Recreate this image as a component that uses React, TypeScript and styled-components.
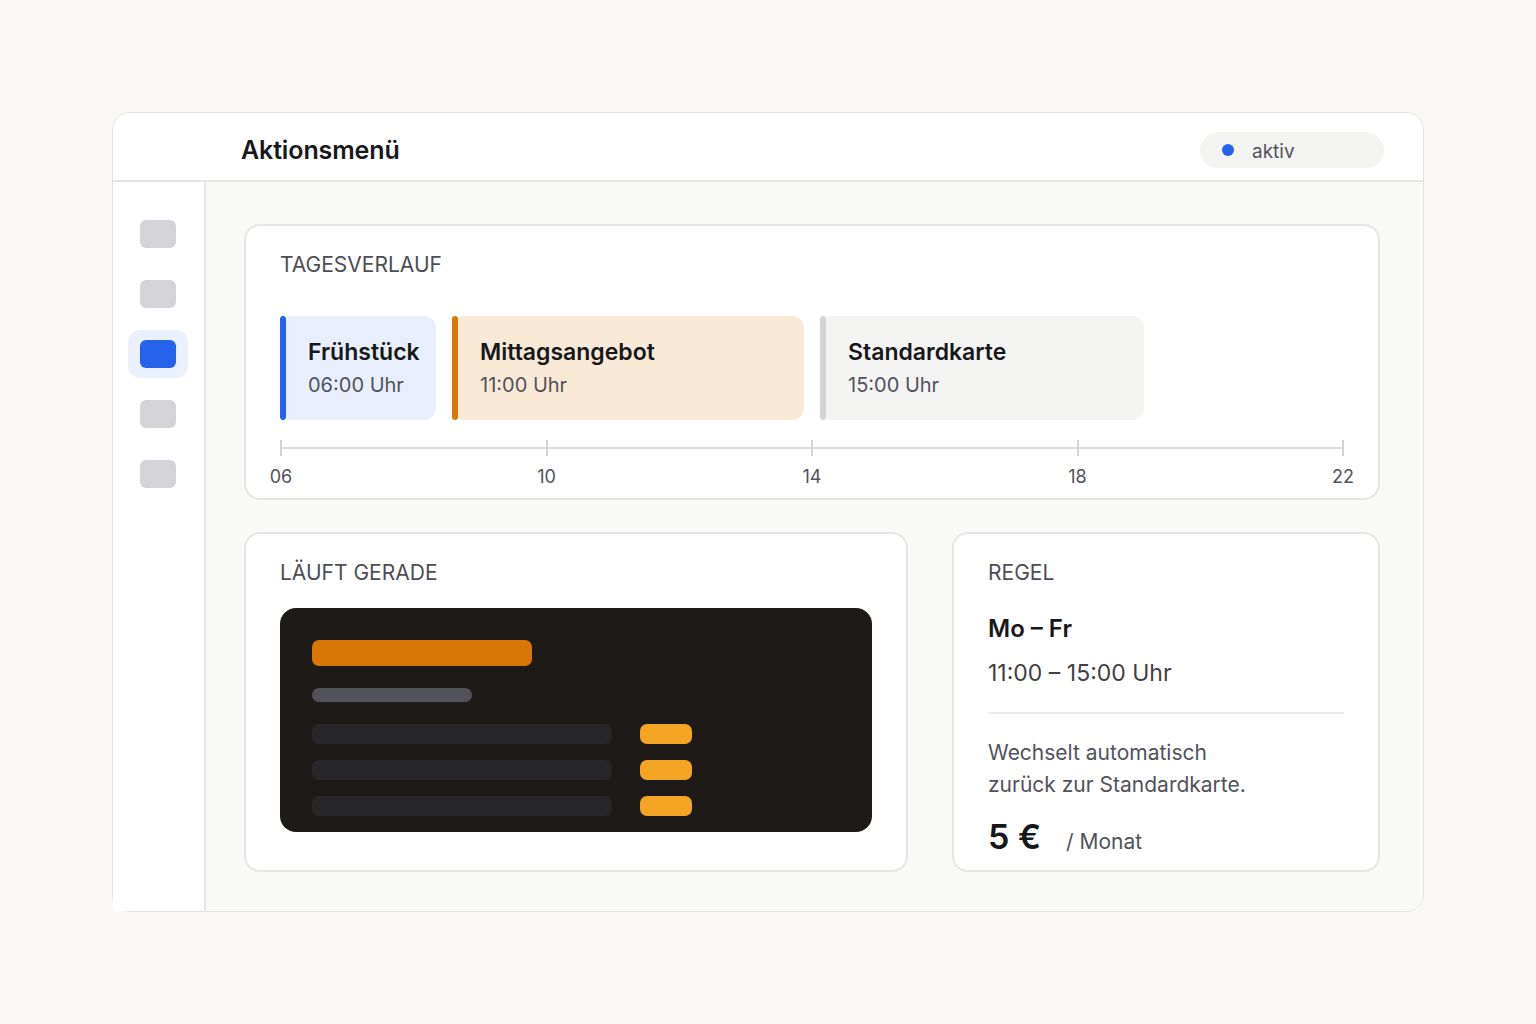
import styled, { createGlobalStyle } from "styled-components";

const GlobalStyle = createGlobalStyle`
  * {
    box-sizing: border-box;
  }
  body {
    margin: 0;
    background: #faf8f4;
    font-family: Inter, "Noto Sans", sans-serif;
    color: #18181b;
  }
`;

const Page = styled.div`
  padding: 112px;
  display: flex;
  justify-content: center;
`;

const Frame = styled.div`
  width: 1312px;
  height: 800px;
  background: #fff;
  border: 1px solid #e5e4e2;
  border-radius: 18px;
  display: flex;
  flex-direction: column;
`;

const Header = styled.header`
  height: 69px;
  flex-shrink: 0;
  border-bottom: 2px solid #e7e6e4;
  display: flex;
  align-items: center;
  justify-content: space-between;
  padding: 7px 39px 0 128px;
`;

const Title = styled.h1`
  margin: 0;
  font-size: 25px;
  font-weight: 600;
  letter-spacing: -0.005em;
  color: #18181b;
`;

const Status = styled.div`
  width: 184px;
  height: 36px;
  border-radius: 18px;
  background: #f4f4f3;
  display: flex;
  align-items: center;
  gap: 18px;
  padding: 2px 0 0 22px;
  font-size: 19px;
  color: #52525b;
`;

const Dot = styled.span`
  width: 12px;
  height: 12px;
  margin-top: -2px;
  border-radius: 50%;
  background: #2563eb;
`;

const Body = styled.div`
  flex: 1;
  display: flex;
  min-height: 0;
`;

const Sidebar = styled.nav`
  width: 93px;
  flex-shrink: 0;
  background: #fff;
  border-right: 2px solid #e7e6e4;
  padding: 28px 2px 0 0;
  display: flex;
  flex-direction: column;
  align-items: center;
  gap: 12px;
`;

const NavItem = styled.div<{ $active?: boolean }>`
  width: 60px;
  height: 48px;
  border-radius: 12px;
  background: ${(p) => (p.$active ? "#eaf0fd" : "transparent")};
  display: flex;
  align-items: center;
  justify-content: center;

  &::after {
    content: "";
    width: 36px;
    height: 28px;
    border-radius: 6px;
    background: ${(p) => (p.$active ? "#2563eb" : "#d4d4d8")};
  }
`;

const Main = styled.main`
  flex: 1;
  min-width: 0;
  background: #f9f9f8;
  border-bottom-right-radius: 17px;
  padding: 42px 43px 39px 38px;
  display: flex;
  flex-direction: column;
  gap: 32px;
`;

const Card = styled.section<{ $bottom?: number }>`
  background: #fff;
  border: 2px solid #e7e6e4;
  border-radius: 16px;
  padding: 27px 34px ${(p) => p.$bottom ?? 36}px;
  display: flex;
  flex-direction: column;
  min-height: 0;
`;

const Label = styled.div`
  font-size: 21px;
  line-height: 24px;
  color: #4d4d55;
  text-transform: uppercase;
`;

const Blocks = styled.div`
  display: flex;
  gap: 16px;
  margin-top: 39px;
`;

const Block = styled.div<{ $width: number }>`
  width: ${(p) => p.$width}px;
  height: 104px;
  display: flex;
`;

const BlockBar = styled.div<{ $color: string }>`
  width: 6px;
  border-radius: 3px;
  background: ${(p) => p.$color};
`;

const BlockBody = styled.div<{ $bg: string }>`
  flex: 1;
  background: ${(p) => p.$bg};
  border-radius: 4px 12px 12px 4px;
  padding: 22px 0 0 22px;
`;

const BlockName = styled.div`
  font-size: 23px;
  line-height: 28px;
  font-weight: 600;
  color: #18181b;
  white-space: nowrap;
`;

const BlockTime = styled.div`
  margin-top: 7px;
  font-size: 20px;
  line-height: 24px;
  color: #52525b;
`;

const TickRow = styled.div`
  margin-top: 20px;
  height: 16px;
  display: flex;
  justify-content: space-between;
  background: linear-gradient(#dcdce0, #dcdce0) center / 100% 2px no-repeat;
`;

const Tick = styled.span`
  width: 2px;
  height: 16px;
  background: #d4d4d8;
`;

const AxisLabels = styled.div`
  margin-top: 10px;
  display: flex;
  justify-content: space-between;
`;

const AxisLabel = styled.span`
  width: 2px;
  display: flex;
  justify-content: center;
  font-size: 18px;
  line-height: 22px;
  color: #52525b;
  white-space: nowrap;
`;

const Row = styled.div`
  flex: 1;
  min-height: 0;
  display: grid;
  grid-template-columns: 664px 1fr;
  column-gap: 44px;
`;

const Screen = styled.div`
  margin-top: 23px;
  height: 224px;
  border-radius: 16px;
  background: #1e1a17;
  padding: 32px;
  display: flex;
  flex-direction: column;
`;

const Bar = styled.div<{ $w: number; $h: number; $color: string; $mt?: number }>`
  width: ${(p) => p.$w}px;
  height: ${(p) => p.$h}px;
  margin-top: ${(p) => p.$mt ?? 0}px;
  border-radius: ${(p) => Math.min(7, p.$h / 2)}px;
  background: ${(p) => p.$color};
  flex-shrink: 0;
`;

const MenuLines = styled.div`
  margin-top: 22px;
  display: flex;
  flex-direction: column;
  gap: 16px;
`;

const MenuLine = styled.div`
  display: flex;
  gap: 28px;
`;

const Days = styled.div`
  margin-top: 30px;
  font-size: 24px;
  line-height: 28px;
  font-weight: 600;
  color: #18181b;
`;

const Hours = styled.div`
  margin-top: 16px;
  font-size: 23px;
  line-height: 28px;
  color: #3f3f46;
`;

const Divider = styled.hr`
  margin: 25px 0 0;
  border: none;
  border-top: 2px solid #ececeb;
`;

const Note = styled.p`
  margin: 23px 0 0;
  font-size: 21px;
  line-height: 32px;
  color: #52525b;
`;

const Price = styled.div`
  margin-top: 16px;
  display: flex;
  align-items: baseline;
  gap: 25px;
`;

const Amount = styled.span`
  font-size: 34px;
  line-height: 40px;
  font-weight: 600;
  color: #18181b;
`;

const Period = styled.span`
  font-size: 21px;
  color: #52525b;
`;

const blocks = [
  { name: "Frühstück", time: "06:00 Uhr", width: 156, bar: "#2563eb", bg: "#e8eefc" },
  { name: "Mittagsangebot", time: "11:00 Uhr", width: 352, bar: "#d97706", bg: "#f9ead8" },
  { name: "Standardkarte", time: "15:00 Uhr", width: 324, bar: "#d4d4d8", bg: "#f4f4f3" },
];

const hours = ["06", "10", "14", "18", "22"];

export default function App() {
  return (
    <>
      <GlobalStyle />
      <Page>
        <Frame>
          <Header>
            <Title>Aktionsmenü</Title>
            <Status>
              <Dot />
              aktiv
            </Status>
          </Header>
          <Body>
            <Sidebar>
              <NavItem />
              <NavItem />
              <NavItem $active />
              <NavItem />
              <NavItem />
            </Sidebar>
            <Main>
              <Card $bottom={10}>
                <Label>Tagesverlauf</Label>
                <Blocks>
                  {blocks.map((b) => (
                    <Block key={b.name} $width={b.width}>
                      <BlockBar $color={b.bar} />
                      <BlockBody $bg={b.bg}>
                        <BlockName>{b.name}</BlockName>
                        <BlockTime>{b.time}</BlockTime>
                      </BlockBody>
                    </Block>
                  ))}
                </Blocks>
                <TickRow>
                  {hours.map((h) => (
                    <Tick key={h} />
                  ))}
                </TickRow>
                <AxisLabels>
                  {hours.map((h) => (
                    <AxisLabel key={h}>{h}</AxisLabel>
                  ))}
                </AxisLabels>
              </Card>
              <Row>
                <Card>
                  <Label>Läuft gerade</Label>
                  <Screen>
                    <Bar $w={220} $h={26} $color="#d97706" />
                    <Bar $w={160} $h={14} $color="#52525b" $mt={22} />
                    <MenuLines>
                      {[0, 1, 2].map((i) => (
                        <MenuLine key={i}>
                          <Bar $w={300} $h={20} $color="#27272a" />
                          <Bar $w={52} $h={20} $color="#f4a524" />
                        </MenuLine>
                      ))}
                    </MenuLines>
                  </Screen>
                </Card>
                <Card $bottom={11}>
                  <Label>Regel</Label>
                  <Days>Mo – Fr</Days>
                  <Hours>11:00 – 15:00 Uhr</Hours>
                  <Divider />
                  <Note>
                    Wechselt automatisch
                    <br />
                    zurück zur Standardkarte.
                  </Note>
                  <Price>
                    <Amount>5 €</Amount>
                    <Period>/ Monat</Period>
                  </Price>
                </Card>
              </Row>
            </Main>
          </Body>
        </Frame>
      </Page>
    </>
  );
}
